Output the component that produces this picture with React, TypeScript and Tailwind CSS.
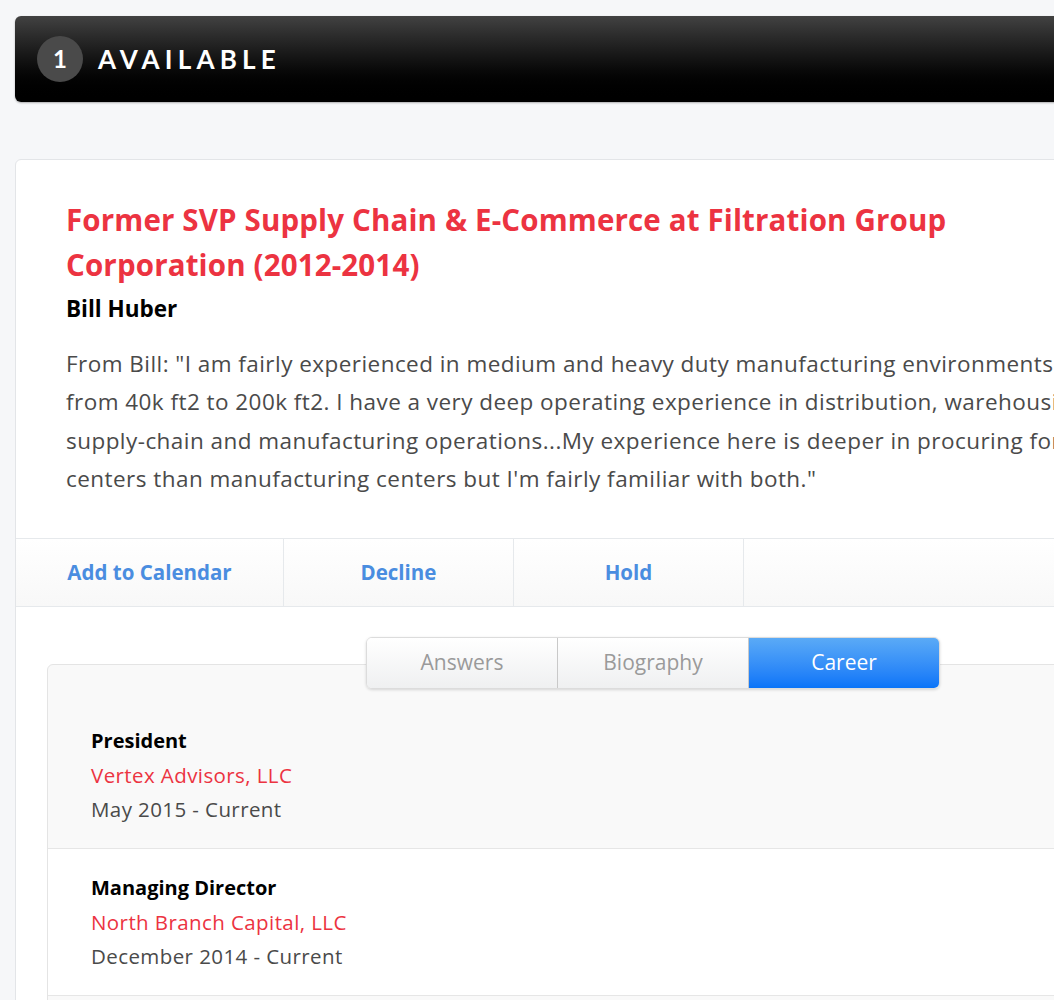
import React from "react";

const careers = [
  { title: "President", company: "Vertex Advisors, LLC", dates: "May 2015 - Current" },
  { title: "Managing Director", company: "North Branch Capital, LLC", dates: "December 2014 - Current" },
  { title: "Chief Executive Officer", company: "Filtration Group Corporation", dates: "June 2014 - November 2014" },
];

const actions = ["Add to Calendar", "Decline", "Hold"];

function App() {
  const [tab, setTab] = React.useState("Career");

  return (
    <div className="min-h-screen w-full overflow-hidden bg-[#f6f7f9] font-['Open_Sans',sans-serif]">
      <div className="w-[1240px] pl-[15px] pt-[16px]">
        <div className="flex h-[86px] items-center rounded-[6px] bg-gradient-to-b from-[#424242] to-[#000000] pl-[22px] shadow-[0_1px_2px_rgba(0,0,0,0.3)]">
          <div className="flex h-[46px] w-[46px] items-center justify-center rounded-full bg-[#4a4a4a] font-['Lato',sans-serif] text-[24px] font-bold text-white">
            1
          </div>
          <div className="ml-[15px] font-['Lato',sans-serif] text-[26px] font-bold tracking-[0.2em] text-white">AVAILABLE</div>
        </div>

        <div className="mt-[57px] rounded-[6px] border border-[#e3e5e8] bg-white">
          <div className="px-[50px] pt-[37px] pb-[39px]">
            <h1 className="w-[1060px] text-[29.5px] font-bold leading-[45px] tracking-[0.005em] text-[#ec3341]">
              Former SVP Supply Chain &amp; E-Commerce at Filtration Group
              <br />
              Corporation (2012-2014)
            </h1>
            <h2 className="text-[22.5px] font-bold leading-[44px] text-black">Bill Huber</h2>
            <p className="mt-[14px] whitespace-nowrap text-[22.5px] leading-[38.4px] tracking-[0.02em] text-[#4a4a4a]">
              From Bill: "I am fairly experienced in medium and heavy duty manufacturing environments
              <br />
              from 40k ft2 to 200k ft2. I have a very deep operating experience in distribution, warehousing,
              <br />
              supply-chain and manufacturing operations...My experience here is deeper in procuring for distribution
              <br />
              centers than manufacturing centers but I'm fairly familiar with both."
            </p>
          </div>

          <div className="flex h-[69px] border-y border-[#e6e9ec] bg-gradient-to-b from-white to-[#f8f8f8]">
            {actions.map((a, i) => (
              <button
                key={a}
                className={
                  "flex items-center justify-center border-r border-[#e6e9ec] text-[20.5px] font-bold text-[#4a8de0] " +
                  (i === 0 ? "w-[268px]" : "w-[230px]")
                }
              >
                {a}
              </button>
            ))}
            <div className="flex-1" />
          </div>

          <div className="px-[31px] pt-[30px]">
            <div className="relative z-10 ml-[319px] flex h-[52px] w-[574px] overflow-hidden rounded-[6px] border border-[#dcdcdc] shadow-[0_1px_3px_rgba(0,0,0,0.15)]">
              {["Answers", "Biography", "Career"].map((t, i) => (
                <button
                  key={t}
                  onClick={() => setTab(t)}
                  className={
                    "flex-1 text-[21px] " +
                    (i > 0 ? "border-l border-[#c9c9c9] " : "") +
                    (tab === t
                      ? "bg-gradient-to-b from-[#5aaaf6] to-[#0874f8] text-white"
                      : "bg-gradient-to-b from-white to-[#eff0f1] text-[#9a9a9a]")
                  }
                >
                  {t}
                </button>
              ))}
            </div>

            <div className="-mt-[25px] rounded-t-[6px] border border-[#e4e4e4] bg-[#f9f9f9] pt-[37px]">
              {careers.map((c, i) => (
                <div
                  key={c.title}
                  className={
                    "px-[43px] py-[22px] " +
                    (i > 0 ? "border-t border-[#e6e6e6] " : "") +
                    (i % 2 === 0 ? "bg-[#f9f9f9]" : "bg-white")
                  }
                >
                  <div className="text-[20px] font-bold leading-[34px] text-black">{c.title}</div>
                  <div className="text-[20.5px] leading-[34px] tracking-[0.02em] text-[#ec3341]">{c.company}</div>
                  <div className="text-[20.5px] leading-[34px] tracking-[0.02em] text-[#4a4a4a]">{c.dates}</div>
                </div>
              ))}
            </div>
          </div>
        </div>
      </div>
    </div>
  );
}

export default App;
